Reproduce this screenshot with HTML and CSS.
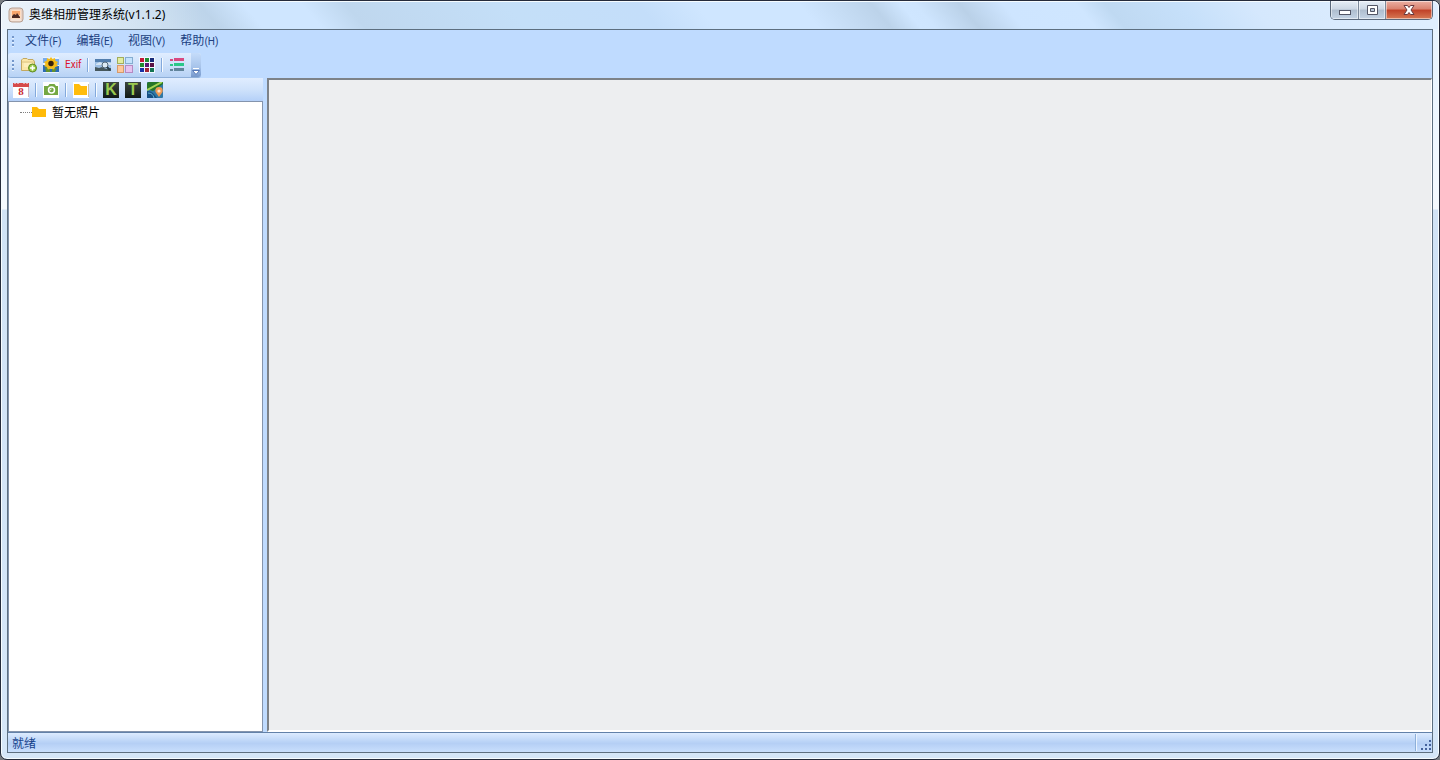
FILE: index.html
```
<!DOCTYPE html>
<html lang="zh-CN">
<head>
  <meta charset="UTF-8">
  <title>奥维相册管理系统(v1.1.2)</title>
  <link rel="stylesheet" href="styles.css">
</head>
<body>
  <div class="window">
    <header class="titlebar">
      <svg class="app-icon" viewBox="0 0 16 16">
        <rect x="1" y="1" width="14" height="14" rx="3" fill="#ead4c6" stroke="#b9a193"/>
        <rect x="3" y="3" width="10" height="9" rx="1" fill="#ffdcc0"/>
        <path d="M4 4h8v4H4z" fill="#f8a56b"/>
        <path d="M4 11V9l2-2 2 1 1-2 3 4v1z" fill="#4b2923"/>
        <path d="M3 13h10" stroke="#fff4ea"/>
      </svg>
      <h1>奥维相册管理系统(v1.1.2)</h1>
      <div class="window-buttons">
        <button class="minimize" aria-label="最小化">
          <svg viewBox="0 0 14 12"><rect x="1.500" y="6.500" width="11" height="4" fill="#fff" stroke="#535666"/></svg>
        </button>
        <button class="maximize" aria-label="最大化">
          <svg viewBox="0 0 14 12"><path d="M2.500 1.500h10v9h-10z" fill="#fff" stroke="#535666"/><path d="M5.500 4.500h4v3h-4z" fill="#b9c6d8" stroke="#535666"/></svg>
        </button>
        <button class="close" aria-label="关闭">
          <svg viewBox="0 0 14 12"><path d="M2 1.500h3.500L7 3.500l1.500-2H12L9 6l3 4.500H8.500L7 8.500l-1.500 2H2L5 6z" fill="#fff" stroke="#6b3a3f"/></svg>
        </button>
      </div>
    </header>

    <div class="client">
      <nav class="menubar">
        <span class="grip"></span>
        <button>文件<span>(F)</span></button>
        <button>编辑<span>(E)</span></button>
        <button>视图<span>(V)</span></button>
        <button>帮助<span>(H)</span></button>
      </nav>

      <div class="toolbar main-toolbar">
        <span class="grip"></span>
        <button aria-label="添加照片">
          <svg viewBox="0 0 16 16">
            <path d="M.5 3V13.500h13V4.500L12 2.500H7L6 1.500H2z" fill="#fbe6a6" stroke="#c3a860"/>
            <path d="M1 5h12" stroke="#dcc584"/><path d="M3 7h8M3 9h5" stroke="#fff6cf"/>
            <circle cx="11.500" cy="11" r="4" fill="#9aca45" stroke="#5f8a23"/>
            <path d="M11.500 8.500v5M9 11h5" stroke="#fff" stroke-width="1.600"/>
          </svg>
        </button>
        <button aria-label="图片">
          <svg viewBox="0 0 16 16">
            <rect width="16" height="16" fill="#e8f2ff"/>
            <path d="M0 1h4v5H0zM12 2h4v6h-4z" fill="#79acec"/>
            <path d="M0 8h3l5 4 5-3h3v6H0z" fill="#2b6bb8"/>
            <path d="M2 10l5 2v3H3zM14 11l-5 1v3h3z" fill="#63922f"/>
            <path d="M8 0l1.500 2L12 1l.3 2.700L15 5l-1.500 2L15 9l-2.700 1L11 12.500 8 11.500 5 12.500 3.700 10 1 9l1.500-2L1 5l2.700-1.300L4 1l2.500 1z" fill="#f4bc18"/>
            <circle cx="8" cy="6.500" r="2.700" fill="#38210b"/>
          </svg>
        </button>
        <button class="exif">Exif</button>
        <span class="separator"></span>
        <button aria-label="查看大图">
          <svg viewBox="0 0 16 16">
            <rect y="2" width="16" height="12" fill="#9dbfe4"/>
            <path d="M0 2h16v3H0z" fill="#527eae"/>
            <path d="M1 7l4-2 3 2 4-2 4 1v2H1z" fill="#d5e4f2"/>
            <path d="M0 10l4 1 3-1 4 2 5-1v3H0z" fill="#46575c"/>
            <circle cx="10" cy="8" r="3" fill="#dceaf4" stroke="#526879"/>
            <path d="M12 10l3 3" stroke="#293e4a" stroke-width="2"/>
          </svg>
        </button>
        <button aria-label="缩略图">
          <svg viewBox="0 0 16 16">
            <rect x=".5" y=".5" width="6" height="6" fill="#e2eea0" stroke="#a3ad5c"/>
            <rect x="8.500" y=".5" width="7" height="6" fill="#c4e2fc" stroke="#85add0"/>
            <rect x=".5" y="8.500" width="6" height="7" fill="#ffc79b" stroke="#d69a6b"/>
            <rect x="8.500" y="8.500" width="7" height="7" fill="#e6c2ef" stroke="#b48ac2"/>
          </svg>
        </button>
        <button aria-label="小图标">
          <svg viewBox="0 0 16 16">
            <rect width="16" height="16" fill="#f3f7ff"/>
            <path d="M1 1h4v4H1z" fill="#c41637"/><path d="M6 1h4v4H6zM1 6h4v4H1z" fill="#218b31"/>
            <path d="M11 1h4v4h-4z" fill="#162b79"/><path d="M6 6h4v4H6z" fill="#5b1672"/>
            <path d="M11 6h4v4h-4z" fill="#591044"/><path d="M1 11h4v4H1z" fill="#1a32a5"/>
            <path d="M6 11h4v4H6z" fill="#a12436"/><path d="M11 11h4v4h-4z" fill="#147454"/>
          </svg>
        </button>
        <span class="separator"></span>
        <button aria-label="列表">
          <svg viewBox="0 0 16 16">
            <path d="M1 2h3v2H1zM5 1h10v3H5z" fill="#d94a80"/>
            <path d="M1 7h3v2H1zM5 6h10v3H5z" fill="#2bc889"/>
            <path d="M1 12h3v2H1zM5 11h10v3H5z" fill="#61849b"/>
          </svg>
        </button>
        <button class="overflow" aria-label="工具栏选项">
          <svg viewBox="0 0 10 10"><path d="M2 1.500h6" stroke="#fff"/><path d="M1.500 3.500h7L5 7.500z" fill="#fff" stroke="#5478b8"/></svg>
        </button>
      </div>

      <div class="workspace">
        <aside class="sidebar">
          <div class="toolbar side-toolbar">
            <button aria-label="按日期">
              <svg viewBox="0 0 16 16"><rect y="1" width="16" height="15" fill="#fff"/><path d="M0 1h16v4H0z" fill="#d54a4b"/><path d="M2 1v1M5 1v1M11 1v1M14 1v1" stroke="#fff"/><path d="M15.500 5v10" stroke="#cfb7bd"/><text class="date-number" x="8" y="13">8</text></svg>
            </button>
            <span class="separator"></span>
            <button aria-label="按相机">
              <svg viewBox="0 0 16 16"><rect width="16" height="16" fill="#fff"/><path d="M1 4h4l1.500-2h5L13 4h2v9H1z" fill="#75a843"/><circle cx="8.500" cy="8" r="3" fill="#75a843" stroke="#fff" stroke-width="1.500"/><path d="M7 8.500q0-1.500 1.500-1.500" fill="none" stroke="#fff"/></svg>
            </button>
            <span class="separator"></span>
            <button aria-label="按文件夹">
              <svg viewBox="0 0 16 16"><rect width="16" height="16" fill="#fff"/><path d="M1 2h5l2 2h6v9H1z" fill="#ffbc0b"/><path d="M15.500 2v13" stroke="#cfc0a1"/></svg>
            </button>
            <span class="separator"></span>
            <button class="letter-icon">K</button>
            <button class="letter-icon">T</button>
            <button aria-label="地图">
              <svg viewBox="0 0 16 16"><rect width="16" height="16" rx="1" fill="#2f78a5"/><path d="M0 7V2q0-2 2-2h14v2L6 9z" fill="#267628"/><path d="M0 8q6-3 15-8" fill="none" stroke="#a6d554" stroke-width="2"/><path d="M0 9q5-1 10 7H0z" fill="#174f83"/><path d="M1 11q5 0 6 5" fill="none" stroke="#5fafd0"/><path d="M12 15L8.500 10q-1-5 3.500-5t3.500 5z" fill="#ef9a55"/><circle cx="12" cy="9" r="1.600" fill="#ffe6cd"/></svg>
            </button>
          </div>
          <ul class="tree">
            <li>
              <span class="branch"></span>
              <svg viewBox="0 0 14 12"><path d="M0 1h5l2 2h7v8H0z" fill="#ffba08"/></svg>
              <span>暂无照片</span>
            </li>
          </ul>
        </aside>
        <main class="viewer"></main>
      </div>

      <footer class="statusbar">
        <span class="status-text">就绪</span>
        <div class="resize-grip">
          <svg viewBox="0 0 12 12"><path d="M9 1h2v2H9zM5 5h2v2H5zM9 5h2v2H9zM1 9h2v2H1zM5 9h2v2H5zM9 9h2v2H9z" fill="#45639d"/></svg>
        </div>
      </footer>
    </div>
  </div>
</body>
</html>
```
FILE: styles.css
```
* { box-sizing: border-box; }
html, body {
  margin: 0;
  height: 100%;
  overflow: hidden;
  background: #777b80;
}
body, button {
  font-family: "Noto Sans", "Noto Sans CJK SC", sans-serif;
  font-size: 12px;
}
button {
  margin: 0;
  padding: 0;
  border: 0;
  background: none;
  color: inherit;
}
svg { display: block; }

.window {
  display: flex;
  flex-direction: column;
  height: 100vh;
  padding: 0 6px 6px;
  border: 1px solid #252b3b;
  border-radius: 7px;
  box-shadow: inset 0 0 0 1px #f6fcff;
  background: linear-gradient(#e5f2ff 0, #f5faff 208px, #d1e3f6 209px, #d5e6f8 100%);
}

/* glass title bar */
.titlebar {
  display: flex;
  flex: none;
  height: 28px;
  margin: 0 -6px;
  padding-left: 7px;
  border-radius: 6px 6px 0 0;
  box-shadow: inset 0 1px 0 #f6fcff, inset 1px 0 0 #f6fcff, inset -1px 0 0 #f6fcff;
  background:
    linear-gradient(90deg, rgba(255,255,255,.5), rgba(255,255,255,0) 200px),
    linear-gradient(50deg, #d9e8f6 0, #c6dbee 12%, #bdd4ea 15%, #cfe6ff 18%, #cfe6ff 22%, #bfd7ee 25%, #c4dff8 36%, #c4defa 45%, #cfe6ff 49%, #cfe6ff 56%, #bcd3ea 61%, #cfe6ff 63%, #cee5fe 64%, #bad1e8 67%, #cee5ff 70%, #cfe6ff 75%, #bfd9f2 77%, #c6e0fa 82%, #d5e8fd 87%, #e0effe 100%);
}
.app-icon {
  width: 16px;
  height: 16px;
  margin: 6px 5px 0 0;
}
.titlebar h1 {
  margin: 4px auto 0 0;
  font-size: 12px;
  font-weight: 400;
  line-height: 20px;
  color: #000;
}
.window-buttons {
  display: flex;
  height: 19px;
  margin-right: 6px;
  border: 1px solid #5a687a;
  border-top: 0;
  border-radius: 0 0 5px 5px;
  overflow: hidden;
}
.window-buttons button {
  display: flex;
  align-items: center;
  justify-content: center;
  width: 28px;
  border-right: 1px solid #7c899a;
  box-shadow: inset 0 0 0 1px rgba(255,255,255,.5);
  background: linear-gradient(#e6eef7, #ccd7e4 45%, #aebdce 50%, #c5d4e5);
}
.window-buttons .maximize { width: 27px; }
.window-buttons .close {
  width: 46px;
  border-right: 0;
  background: linear-gradient(#ebb0a3, #d9816e 45%, #c04027 50%, #d77a55);
}
.window-buttons svg { width: 14px; height: 12px; }

.client {
  display: flex;
  flex: 1;
  flex-direction: column;
  min-height: 0;
  border: 1px solid #5d6f80;
  background: #bfdbff;
}

.menubar {
  display: flex;
  flex: none;
  align-items: center;
  height: 23px;
  padding-left: 4px;
  color: #204080;
}
.menubar button {
  margin-right: 15px;
  line-height: 20px;
  white-space: nowrap;
}
.menubar button span {
  font-family: Roboto, sans-serif;
  font-size: 10px;
}
.grip {
  flex: none;
  width: 2px;
  height: 11px;
  margin-right: 11px;
  background: repeating-linear-gradient(#7497cb 0 2px, #e5f1ff 2px 3px, transparent 3px 4px);
}

.toolbar {
  display: flex;
  flex: none;
  align-items: center;
  gap: 6px;
}
.toolbar button, .toolbar svg {
  width: 16px;
  height: 16px;
}
.toolbar .exif {
  color: #dc102c;
  font-family: Roboto, sans-serif;
  font-size: 10px;
  line-height: 16px;
}
.separator {
  width: 2px;
  height: 14px;
  border-left: 1px solid #83a9dc;
  border-right: 1px solid #f7fbff;
}
.main-toolbar {
  align-self: flex-start;
  height: 25px;
  padding-left: 4px;
  border-bottom: 1px solid #8eafd9;
  border-radius: 3px;
  background: linear-gradient(#e0edff, #cee1fa 50%, #b7d2f5);
}
.main-toolbar .grip { margin-right: 1px; }
.toolbar .overflow {
  display: flex;
  align-items: flex-end;
  width: 10px;
  height: 24px;
  border-radius: 0 3px 3px 0;
  background: linear-gradient(#c5dcfa, #a6c3ea 60%, #7597cb);
}
.toolbar .overflow svg { width: 10px; height: 10px; }

.workspace {
  display: flex;
  flex: 1;
  min-height: 0;
  gap: 4px;
}
.sidebar {
  display: flex;
  flex: none;
  flex-direction: column;
  width: 255px;
}
.side-toolbar {
  height: 23px;
  padding-left: 5px;
  background: linear-gradient(#e0edff, #cfe2fb 50%, #b4d0f8);
}
.toolbar .letter-icon {
  background: linear-gradient(#3c463f, #111916);
  color: #9aca50;
  font-family: "Liberation Sans", sans-serif;
  font-size: 16px;
  font-weight: 700;
  line-height: 16px;
}
.date-number {
  font-family: "Liberation Serif", serif;
  font-size: 11px;
  font-weight: 700;
  text-anchor: middle;
  fill: #c82934;
}
.tree {
  flex: 1;
  margin: 0;
  padding: 0;
  border: 1px solid #8494ad;
  background: #fff;
  list-style: none;
}
.tree li {
  display: flex;
  align-items: center;
  height: 20px;
  padding-left: 11px;
  color: #000;
}
.tree svg {
  width: 14px;
  height: 12px;
  margin-right: 6px;
}
.branch {
  width: 12px;
  border-top: 1px dotted #808080;
}
.viewer {
  flex: 1;
  border: 2px solid #fff;
  border-top-color: #7d8288;
  border-left-color: #7d8288;
  border-right-width: 1px;
  background: #edeef0;
}

.statusbar {
  display: flex;
  flex: none;
  align-items: center;
  justify-content: space-between;
  height: 20px;
  padding-left: 4px;
  border-top: 1px solid #6281a9;
  background: linear-gradient(#dcebff, #bbd4f7 45%, #b5cff5 55%, #c9dffd);
  color: #15428b;
}
.resize-grip {
  display: flex;
  align-items: flex-end;
  height: 17px;
  padding-left: 4px;
  border-left: 1px solid #8dafd9;
  box-shadow: inset 1px 0 0 #edf5ff;
}
.resize-grip svg { width: 12px; height: 12px; }
```
